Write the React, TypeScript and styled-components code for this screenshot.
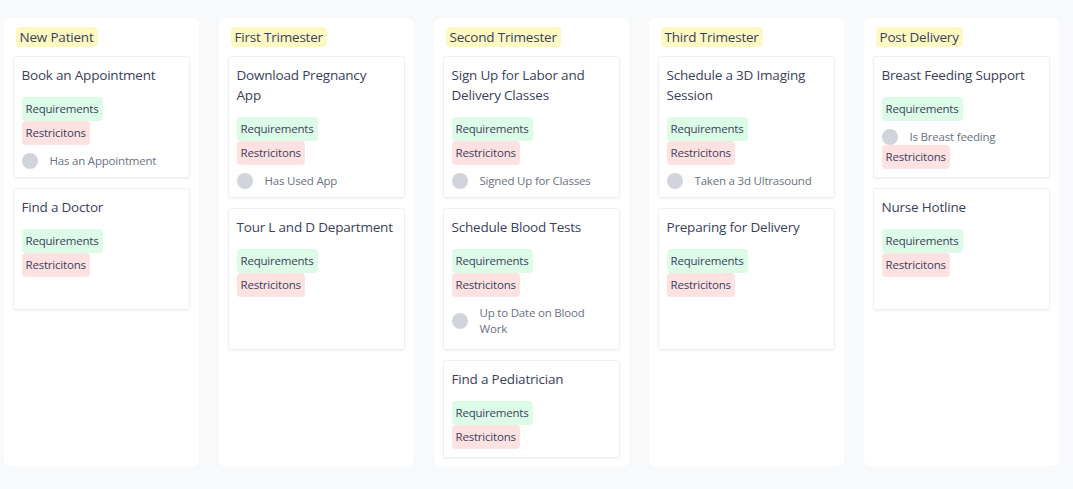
import styled, { createGlobalStyle } from 'styled-components'

type Check = { label: string }

type CardData = {
  title: string
  check?: Check
  // where the checkbox row goes: after both tags, or between them
  checkBetween?: boolean
}

type ColumnData = {
  name: string
  cards: CardData[]
}

const columns: ColumnData[] = [
  {
    name: 'New Patient',
    cards: [
      { title: 'Book an Appointment', check: { label: 'Has an Appointment' } },
      { title: 'Find a Doctor' },
    ],
  },
  {
    name: 'First Trimester',
    cards: [
      { title: 'Download Pregnancy App', check: { label: 'Has Used App' } },
      { title: 'Tour L and D Department' },
    ],
  },
  {
    name: 'Second Trimester',
    cards: [
      { title: 'Sign Up for Labor and Delivery Classes', check: { label: 'Signed Up for Classes' } },
      { title: 'Schedule Blood Tests', check: { label: 'Up to Date on Blood Work' } },
      { title: 'Find a Pediatrician' },
    ],
  },
  {
    name: 'Third Trimester',
    cards: [
      { title: 'Schedule a 3D Imaging Session', check: { label: 'Taken a 3d Ultrasound' } },
      { title: 'Preparing for Delivery' },
    ],
  },
  {
    name: 'Post Delivery',
    cards: [
      { title: 'Breast Feeding Support', check: { label: 'Is Breast feeding' }, checkBetween: true },
      { title: 'Nurse Hotline' },
    ],
  },
]

const GlobalStyle = createGlobalStyle`
  html, body {
    margin: 0;
    padding: 0;
    background: #f8f9fb;
    font-family: "Open Sans", "Noto Sans", sans-serif;
    color: #374151;
  }
`

const Board = styled.div`
  display: flex;
  gap: 19.5px;
  padding: 18px 0 0 3.5px;
  height: 448px;
`

const Column = styled.section`
  flex: 0 0 195.5px;
  background: #fff;
  border-radius: 6px;
  padding: 9px 9px 0 9px;
  box-sizing: border-box;
  display: flex;
  flex-direction: column;
  gap: 9px;
`

const ColumnTitle = styled.span`
  align-self: flex-start;
  margin-left: 3px;
  background: #fef9c3;
  border-radius: 4px;
  padding: 0 4px;
  font-size: 13.5px;
  line-height: 20px;
  letter-spacing: -0.2px;
  color: #3b3f5c;
`

const CardList = styled.div`
  display: grid;
  grid-template-rows: 1fr 1fr;
  grid-auto-rows: auto;
  gap: 10px;
`

const Card = styled.article`
  background: #fff;
  border: 1px solid #eef0f2;
  border-radius: 3px;
  box-shadow: 0 1px 2px rgba(0, 0, 0, 0.06);
  padding: 8px 8px 8px 8px;
  display: flex;
  flex-direction: column;
  align-items: flex-start;
`

const CardTitle = styled.h3`
  margin: 0 0 12px 0;
  max-width: 156.5px;
  font-weight: 400;
  font-size: 13.5px;
  line-height: 20px;
  letter-spacing: -0.2px;
  color: #3b3f5c;
`

const Tag = styled.span<{ $tone: 'green' | 'red' }>`
  background: ${p => (p.$tone === 'green' ? '#dcfce7' : '#fee2e2')};
  border-radius: 4px;
  padding: 0 4px;
  font-size: 11.5px;
  line-height: 24px;
  letter-spacing: -0.2px;
  color: #3b3f5c;
`

const CheckRow = styled.label`
  display: flex;
  align-items: center;
  gap: 12px;
  margin-top: 8px;
  min-height: 16px;
  font-size: 11.5px;
  line-height: 16px;
  letter-spacing: -0.2px;
  color: #6b7280;
`

const Circle = styled.span`
  flex: 0 0 16px;
  width: 16px;
  height: 16px;
  border-radius: 50%;
  background: #d1d5db;
`

const CheckLabel = styled.span`
  max-width: 128px;
`

const CheckItem = ({ label }: Check) => (
  <CheckRow>
    <Circle />
    <CheckLabel>{label}</CheckLabel>
  </CheckRow>
)

const TaskCard = ({ title, check, checkBetween }: CardData) => (
  <Card>
    <CardTitle>{title}</CardTitle>
    <Tag $tone="green">Requirements</Tag>
    {check && checkBetween && <CheckItem {...check} />}
    <Tag $tone="red">Restricitons</Tag>
    {check && !checkBetween && <CheckItem {...check} />}
  </Card>
)

export default function App() {
  return (
    <>
      <GlobalStyle />
      <Board>
        {columns.map(col => (
          <Column key={col.name}>
            <ColumnTitle>{col.name}</ColumnTitle>
            <CardList>
              {col.cards.map(card => (
                <TaskCard key={card.title} {...card} />
              ))}
            </CardList>
          </Column>
        ))}
      </Board>
    </>
  )
}
